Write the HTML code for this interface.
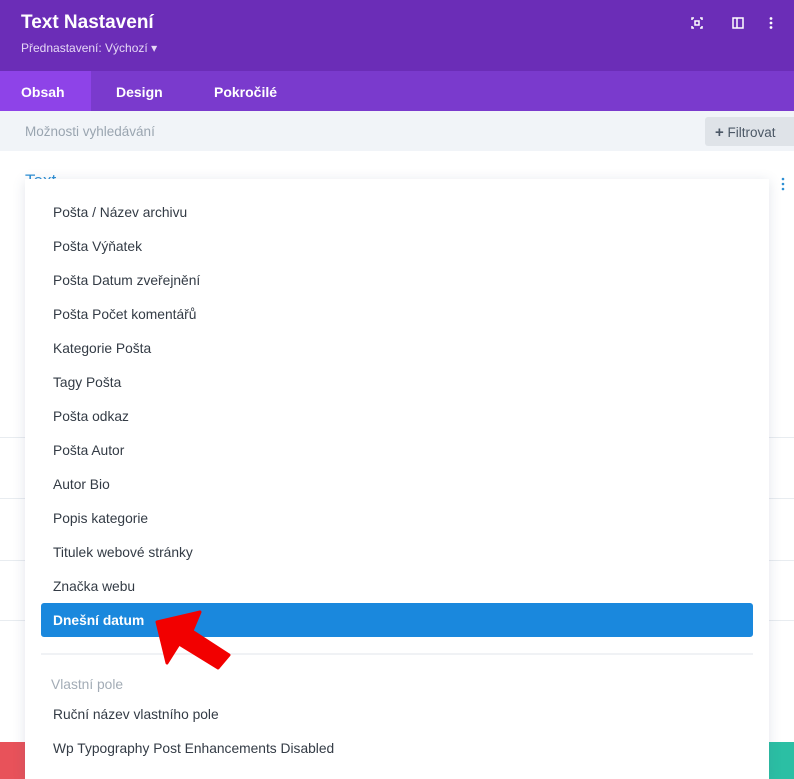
<!DOCTYPE html><html><head><meta charset="utf-8"><style>
*{margin:0;padding:0;box-sizing:border-box}
body{width:794px;height:779px;overflow:hidden;position:relative;background:#fff;font-family:"Liberation Sans",sans-serif}
.a{position:absolute}
.item{position:absolute;left:53px;font-size:13.8px;color:#333b45}
</style></head><body>
<div class="a" style="left:0;top:0;width:794px;height:71px;background:#6b2db7"></div>
<div class="a" style="left:21px;top:12px;font-size:19px;color:#fff;font-weight:bold">Text Nastavení</div>
<div class="a" style="left:21px;top:41px;font-size:12px;color:#e6d8f6">Přednastavení: Výchozí ▾</div>
<svg class="a" style="left:690px;top:16px" width="90" height="16">
<g fill="none" stroke="#fff" stroke-width="1.5"><path d="M2 4V2h2M10 2h2v2M12 10v2h-2M4 12H2v-2"/><rect x="5" y="5" width="4" height="4"/>
<rect x="43" y="2" width="10" height="10"/><path d="M47 2v10"/></g>
<g fill="#fff"><circle cx="81" cy="2.5" r="1.4"/><circle cx="81" cy="7" r="1.4"/><circle cx="81" cy="11.5" r="1.4"/></g></svg>
<div class="a" style="left:0;top:71px;width:794px;height:40px;background:#7a3acd"></div>
<div class="a" style="left:0;top:71px;width:91px;height:40px;background:#8e43e8"></div>
<div class="a" style="left:21px;top:84px;font-size:14px;color:#fff;font-weight:bold">Obsah</div>
<div class="a" style="left:116px;top:84px;font-size:14px;color:#fff;font-weight:bold">Design</div>
<div class="a" style="left:214px;top:84px;font-size:14px;color:#fff;font-weight:bold">Pokročilé</div>
<div class="a" style="left:0;top:111px;width:794px;height:40px;background:#f1f4f8"></div>
<div class="a" style="left:25px;top:124px;font-size:13.5px;color:#9aa5b0">Možnosti vyhledávání</div>
<div class="a" style="left:705px;top:117px;width:92px;height:29px;background:#dfe3e8;border-radius:3px;font-size:13.5px;color:#4c5866;padding:7px 0 0 10px"><b style="font-size:15px">+</b> Filtrovat</div>
<div class="a" style="left:25px;top:171px;font-size:17px;color:#2e8fd4">Text</div>
<svg class="a" style="left:780px;top:177px" width="6" height="14"><g fill="#2e8fd4"><circle cx="3" cy="2" r="1.3"/><circle cx="3" cy="7" r="1.3"/><circle cx="3" cy="12" r="1.3"/></g></svg>
<div class="a" style="left:769px;top:437px;width:25px;height:1px;background:#e8ecf0"></div>
<div class="a" style="left:769px;top:498px;width:25px;height:1px;background:#e8ecf0"></div>
<div class="a" style="left:769px;top:560px;width:25px;height:1px;background:#e8ecf0"></div>
<div class="a" style="left:0;top:437px;width:25px;height:1px;background:#e8ecf0"></div>
<div class="a" style="left:0;top:498px;width:25px;height:1px;background:#e8ecf0"></div>
<div class="a" style="left:0;top:560px;width:25px;height:1px;background:#e8ecf0"></div>
<div class="a" style="left:0;top:620px;width:794px;height:1px;background:#e8ecf0"></div>
<div class="a" style="left:0;top:742px;width:30px;height:37px;background:#e8525a"></div>
<div class="a" style="left:764px;top:742px;width:30px;height:37px;background:#2bbfa4"></div>
<div class="a" style="left:25px;top:179px;width:744px;height:600px;background:#fff;box-shadow:0 2px 12px rgba(60,80,120,.15)"></div>
<div class="item" style="top:205px">Pošta / Název archivu</div>
<div class="item" style="top:239px">Pošta Výňatek</div>
<div class="item" style="top:273px">Pošta Datum zveřejnění</div>
<div class="item" style="top:307px">Pošta Počet komentářů</div>
<div class="item" style="top:341px">Kategorie Pošta</div>
<div class="item" style="top:375px">Tagy Pošta</div>
<div class="item" style="top:409px">Pošta odkaz</div>
<div class="item" style="top:443px">Pošta Autor</div>
<div class="item" style="top:477px">Autor Bio</div>
<div class="item" style="top:511px">Popis kategorie</div>
<div class="item" style="top:545px">Titulek webové stránky</div>
<div class="item" style="top:579px">Značka webu</div>
<div class="a" style="left:41px;top:603px;width:712px;height:34px;background:#1a88dd;border-radius:3px"></div>
<div class="item" style="top:613px;color:#fff;font-weight:bold">Dnešní datum</div>
<div class="a" style="left:41px;top:653px;width:712px;height:2px;background:#f0f2f5"></div>
<div class="item" style="top:677px;left:51px;color:#a3acb6">Vlastní pole</div>
<div class="item" style="top:707px">Ruční název vlastního pole</div>
<div class="item" style="top:741px">Wp Typography Post Enhancements Disabled</div>
<svg class="a" style="left:0;top:0" width="794" height="779"><polygon points="157,622 200,612 192,631 229,655 218,668 179,644 167,663" fill="#f20000" stroke="#f20000" stroke-width="3" stroke-linejoin="round"/></svg>
</body></html>
